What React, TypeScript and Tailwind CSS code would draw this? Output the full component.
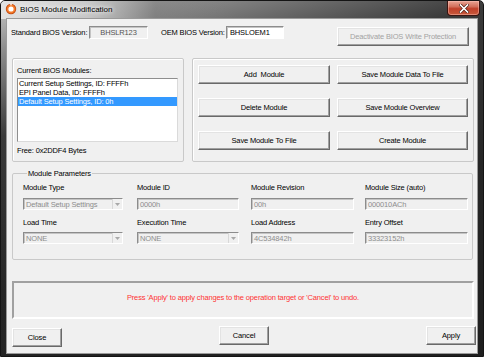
import React from "react";

const btn =
  "flex items-center justify-center bg-[#f0f0f0] border border-t-[#ffffff] border-l-[#ffffff] border-b-[#696969] border-r-[#696969] shadow-[inset_-1px_-1px_0_#a0a0a0,inset_1px_1px_0_#e3e3e3] text-black leading-[9px]";
const sunken =
  "border border-t-[#8c8c8c] border-l-[#8c8c8c] border-b-[#ffffff] border-r-[#ffffff] shadow-[inset_1px_1px_0_#c4c4c4]";

function Field({ value, w }: { value: string; w: string }) {
  return (
    <div className={`${sunken} ${w} h-[12px] bg-[#f0f0f0] flex items-center pl-[2px] text-[#8d8d8d] leading-[9px]`}>
      {value}
    </div>
  );
}

function Combo({ value, w }: { value: string; w: string }) {
  return (
    <div className={`${sunken} ${w} h-[12px] bg-[#f0f0f0] flex items-center text-[#8d8d8d] leading-[9px]`}>
      <span className="flex-1 pl-[2px] whitespace-nowrap overflow-hidden">{value}</span>
      <span className="w-[10px] h-[10px] mr-[0px] flex items-center justify-center bg-[#f0f0f0] border-l border-[#d8d8d8]">
        <svg width="5" height="3" viewBox="0 0 5 3">
          <polygon points="0,0 5,0 2.5,3" fill="#a8a8a8" />
        </svg>
      </span>
    </div>
  );
}

function Label({ children }: { children: React.ReactNode }) {
  return <div className="h-[9px] leading-[9px] text-black whitespace-nowrap">{children}</div>;
}

export default function App() {
  return (
    <div className="w-[484px] h-[357px] flex flex-col overflow-hidden rounded-t-[5px] border border-[#141414] bg-[linear-gradient(165deg,#c8c8c8_0%,#8e8e8e_10%,#3a3a3a_28%,#262626_60%,#1e1e1e_100%)] font-['Liberation_Sans',Arial,sans-serif] text-[7.5px] tracking-[-0.15px] box-border">
      {/* Title bar */}
      <div className="h-[18px] flex items-start shrink-0 bg-[linear-gradient(90deg,rgba(230,230,230,0.9)_0%,rgba(210,210,210,0.8)_18%,rgba(120,120,120,0.4)_32%,rgba(20,20,20,0)_48%)]">
        <div className="mt-[2px] ml-[4px] w-[12px] h-[12px] flex items-center justify-center">
          <svg width="12" height="12" viewBox="0 0 12 12">
            <circle cx="6" cy="6" r="5.2" fill="#c24a10" />
            <circle cx="6" cy="6" r="4.4" fill="#f47a2a" />
            <circle cx="6" cy="6" r="2.6" fill="#ffffff" />
            <rect x="5.3" y="0.3" width="1.4" height="2" fill="#ffffff" />
          </svg>
        </div>
        <div className="mt-[3px] ml-[3px] text-[8px] tracking-[0px] leading-[11px] text-black [text-shadow:0_0_4px_#ffffff,0_0_6px_#ffffff]">
          BIOS Module Modification
        </div>
        <div className="ml-auto mr-[3px] w-[33px] h-[15px] rounded-b-[4px] border border-t-0 border-[#3a1410] bg-[linear-gradient(180deg,#e9a494_0%,#d2705c_40%,#c0402a_55%,#c85a3c_100%)] flex items-center justify-center shadow-[inset_0_0_0_1px_rgba(255,200,190,0.45)]">
          <svg width="10" height="9" viewBox="0 0 10 9">
            <path d="M1.5 1 L8.5 8 M8.5 1 L1.5 8" stroke="#4a1a10" strokeWidth="3" strokeLinecap="square" />
            <path d="M1.5 1 L8.5 8 M8.5 1 L1.5 8" stroke="#ffffff" strokeWidth="1.7" strokeLinecap="square" />
          </svg>
        </div>
      </div>

      {/* Frame body */}
      <div className="flex-1 px-[6px] pb-[3px] pt-[0px] flex">
        <div className="w-[470px] h-[334px] bg-[#f0f0f0] shadow-[0_0_0_1px_#9a9a9a] flex flex-col">
          {/* Row 1 */}
          <div className="flex items-start pl-[4px] h-[27px] shrink-0">
            <div className="w-[78px] mt-[9px] leading-[9px] text-black whitespace-nowrap">Standard BIOS Version:</div>
            <div className={`${sunken} mt-[7px] w-[59px] h-[13px] bg-[#f0f0f0] flex items-center justify-center text-[#555] leading-[9px]`}>
              BHSLR123
            </div>
            <div className="ml-[13px] w-[65px] mt-[9px] leading-[9px] text-black whitespace-nowrap">OEM BIOS Version:</div>
            <div className={`${sunken} mt-[7px] w-[58px] h-[13px] bg-white flex items-center pl-[3px] text-black leading-[9px]`}>
              BHSLOEM1
            </div>
            <div className={`${btn} ml-[53px] mt-[8px] w-[132px] h-[19px] !text-[#a3a3a3]`}>
              Deactivate BIOS Write Protection
            </div>
          </div>

          {/* Groups row */}
          <div className="flex mt-[12px] pl-[5px] gap-[8px] shrink-0">
            <div className="w-[172px] h-[104px] border border-[#c9c9c9] rounded-[2px] shadow-[inset_1px_1px_0_#ffffff] pt-[7px] pl-[4px] pr-[5px] flex flex-col">
              <Label>Current BIOS Modules:</Label>
              <div className="mt-[3px] h-[64px] bg-white border border-t-[#8e8e8e] border-l-[#8e8e8e] border-b-[#dadada] border-r-[#dadada] flex flex-col">
                <div className="h-[9px] leading-[9px] pl-[1px] text-black">Current Setup Settings, ID: FFFFh</div>
                <div className="h-[9px] leading-[9px] pl-[1px] text-black">EPI Panel Data, ID: FFFFh</div>
                <div className="h-[9px] leading-[9px] pl-[1px] bg-[#3399ff] text-white">Default Setup Settings, ID: 0h</div>
              </div>
              <div className="mt-[4px]">
                <Label>Free: 0x2DDF4 Bytes</Label>
              </div>
            </div>
            <div className="w-[282px] h-[104px] border border-[#c9c9c9] rounded-[2px] shadow-[inset_1px_1px_0_#ffffff] pt-[6px] pl-[5px] grid grid-cols-[132px_131px] gap-x-[7px] gap-y-[14px] content-start">
              <div className={`${btn} h-[19px]`}>Add&nbsp; Module</div>
              <div className={`${btn} h-[19px]`}>Save Module Data To File</div>
              <div className={`${btn} h-[19px]`}>Delete Module</div>
              <div className={`${btn} h-[19px]`}>Save Module Overview</div>
              <div className={`${btn} h-[19px]`}>Save Module To File</div>
              <div className={`${btn} h-[19px]`}>Create Module</div>
            </div>
          </div>

          {/* Module Parameters */}
          <fieldset className="mt-[7px] ml-[5px] w-[461px] h-[91px] border border-[#c9c9c9] rounded-[2px] shrink-0 pl-[10px]">
            <legend className="ml-[4px] px-[1px] leading-[9px] text-black">Module Parameters</legend>
            <div className="grid grid-cols-[103px_103px_103px_103px] gap-x-[11px] mt-[5px]">
              <Label>Module Type</Label>
              <Label>Module ID</Label>
              <Label>Module Revision</Label>
              <Label>Module Size (auto)</Label>
            </div>
            <div className="grid grid-cols-[103px_103px_103px_103px] gap-x-[11px] mt-[6px]">
              <Combo value="Default Setup Settings" w="w-[100px]" />
              <Field value="0000h" w="w-[102px]" />
              <Field value="00h" w="w-[103px]" />
              <Field value="000010ACh" w="w-[103px]" />
            </div>
            <div className="grid grid-cols-[103px_103px_103px_103px] gap-x-[11px] mt-[8px]">
              <Label>Load Time</Label>
              <Label>Execution Time</Label>
              <Label>Load Address</Label>
              <Label>Entry Offset</Label>
            </div>
            <div className="grid grid-cols-[103px_103px_103px_103px] gap-x-[11px] mt-[5px]">
              <Combo value="NONE" w="w-[100px]" />
              <Combo value="NONE" w="w-[102px]" />
              <Field value="4C534842h" w="w-[103px]" />
              <Field value="33323152h" w="w-[103px]" />
            </div>
          </fieldset>

          {/* Status */}
          <div className="mt-[21px] ml-[5px] w-[462px] h-[38px] border-2 border-t-[#a0a0a0] border-l-[#a0a0a0] border-b-[#ffffff] border-r-[#ffffff] shrink-0 flex justify-center pt-[10px]">
            <div className="leading-[9px] text-[#ff3333]">
              Press 'Apply' to apply changes to the operation target or 'Cancel' to undo.
            </div>
          </div>

          {/* Bottom buttons */}
          <div className="flex items-start justify-between pl-[5px] pr-[1px] mt-[7px]">
            <div className={`${btn} mt-[2px] w-[50px] h-[19px]`}>Close</div>
            <div className={`${btn} w-[50px] h-[19px]`}>Cancel</div>
            <div className={`${btn} w-[50px] h-[19px]`}>Apply</div>
          </div>
        </div>
      </div>
    </div>
  );
}
